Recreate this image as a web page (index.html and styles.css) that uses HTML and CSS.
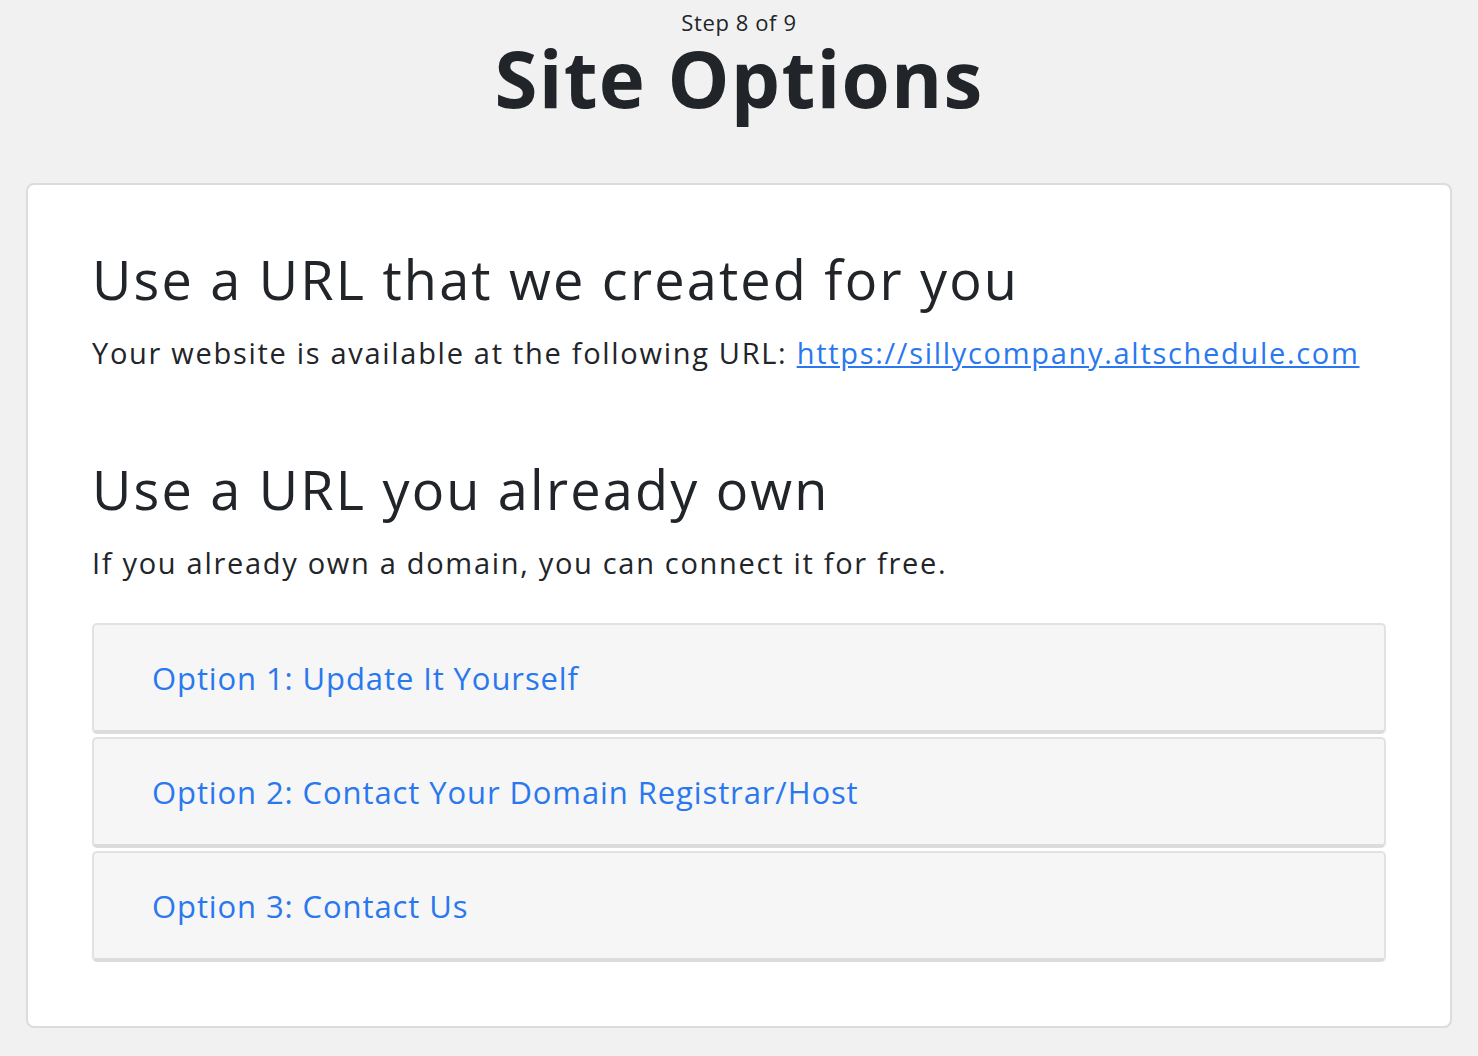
FILE: index.html
```html
<!DOCTYPE html>
<html lang="en">
<head>
    <meta charset="UTF-8">
    <title>Site Options</title>
    <link rel="stylesheet" href="styles.css">
</head>
<body>
    <header class="page-header">
        <p class="step">Step 8 of 9</p>
        <h1 class="page-title">Site Options</h1>
    </header>

    <main class="card">
        <section class="block">
            <h2 class="block-title">Use a URL that we created for you</h2>
            <p class="block-text">Your website is available at the following URL: <a href="#">https://sillycompany.altschedule.com</a></p>
        </section>

        <section class="block block-own">
            <h2 class="block-title">Use a URL you already own</h2>
            <p class="block-text">If you already own a domain, you can connect it for free.</p>

            <div class="options">
                <div class="option"><a href="#">Option 1: Update It Yourself</a></div>
                <div class="option"><a href="#">Option 2: Contact Your Domain Registrar/Host</a></div>
                <div class="option"><a href="#">Option 3: Contact Us</a></div>
            </div>
        </section>
    </main>
</body>
</html>
```

FILE: styles.css
```css
* {
    margin: 0;
    padding: 0;
    box-sizing: border-box;
}

body {
    font-family: 'Open Sans', 'Liberation Sans', sans-serif;
    background: #f1f1f1;
    color: #212529;
    padding: 0 26px 26px;
}

.page-header {
    text-align: center;
    padding-top: 8px;
}

.step {
    font-size: 22px;
    line-height: 28px;
    letter-spacing: 0.6px;
}

.page-title {
    font-size: 78px;
    font-weight: 700;
    line-height: 78px;
    letter-spacing: 1.2px;
    margin-top: 3px;
    margin-bottom: 66px;
}

.card {
    background: #ffffff;
    border: 2px solid #dcdcdc;
    border-radius: 8px;
    padding: 56px 64px 64px;
}

.block-title {
    font-size: 54px;
    font-weight: 400;
    line-height: 76px;
    letter-spacing: 2.2px;
}

.block-text {
    font-size: 29px;
    line-height: 44px;
    margin-top: 14px;
    letter-spacing: 1.7px;
}

.block-text a {
    color: #2a78ef;
}

.block-own {
    margin-top: 76px;
}

.options {
    margin-top: 38px;
    display: flex;
    flex-direction: column;
    gap: 3px;
}

.option {
    background: #f6f6f6;
    border: 2px solid #e2e2e2;
    border-bottom: 4px solid #dcdcdc;
    border-radius: 5px;
    height: 111px;
    padding: 0 58px;
    display: flex;
    align-items: center;
}

.option a {
    color: #2a78ef;
    text-decoration: none;
    font-size: 31px;
    letter-spacing: 0.9px;
}
```
